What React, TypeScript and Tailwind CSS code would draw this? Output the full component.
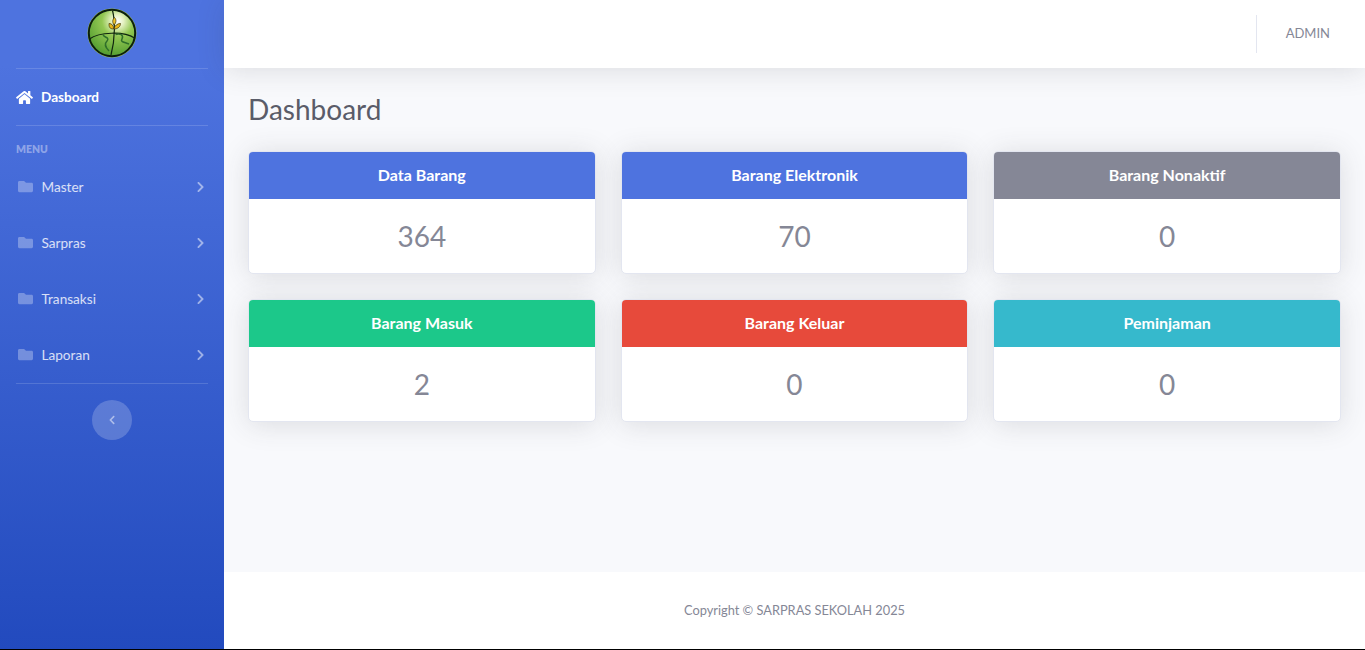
import React from "react";
import { FaHome, FaFolder, FaChevronRight, FaChevronLeft } from "react-icons/fa";

function Logo() {
  return (
    <svg width="50" height="50" viewBox="0 0 50 50" className="block">
      <defs>
        <radialGradient id="g" cx="0.62" cy="0.24" r="0.8">
          <stop offset="0" stopColor="#ffffff" />
          <stop offset="0.16" stopColor="#e6f2c4" />
          <stop offset="0.42" stopColor="#93c853" />
          <stop offset="1" stopColor="#4f9a2e" />
        </radialGradient>
      </defs>
      <circle cx="25" cy="25" r="24.5" fill="#a6c95a" />
      <circle cx="25" cy="25" r="23.2" fill="url(#g)" stroke="#0c1f0c" strokeWidth="2" />
      <path d="M2.5 31 C12 24 37 23 47.5 30" fill="none" stroke="#10260f" strokeWidth="1.2" />
      <path d="M25.5 2.5 C28 12 28.5 30 24 47" fill="none" stroke="#10260f" strokeWidth="1.2" />
      <path d="M16 26.5 C17 30 23 29 20 33 C17 36 18 39 22 43" fill="none" stroke="#2f6f2a" strokeWidth="1.5" />
      <path d="M28.5 26.5 C33 25 37 27 35 31 C33 34 37 34 42 36" fill="none" stroke="#2f6f2a" strokeWidth="1.5" />
      <path d="M26.5 21 C22 21 22 18 22 15.5 C24.5 15.5 27 17.5 26.5 21 Z" fill="#e8b71a" stroke="#3b3208" strokeWidth="0.7" />
      <path d="M27 21 C31 21 33.5 18.5 33.5 15.5 C30.5 15.5 27.5 17.5 27 21 Z" fill="#e8b71a" stroke="#3b3208" strokeWidth="0.7" />
      <path d="M27 17 C25 14 25.5 11.5 27.5 9.5 C29.5 11.5 29.5 14.5 27 17 Z" fill="#f0c52a" stroke="#3b3208" strokeWidth="0.7" />
    </svg>
  );
}

function NavItem({ label }: { label: string }) {
  return (
    <div className="h-14 px-4 flex items-center justify-between text-[13.6px] text-white/80">
      <div className="flex items-center">
        <FaFolder className="w-[15px] h-[15px] text-white/30 ml-[1.5px] mr-[9px]" />
        <span>{label}</span>
      </div>
      <FaChevronRight className="w-[9px] h-[12px] text-white/50 mr-[3px]" />
    </div>
  );
}

function Card({ title, value, color }: { title: string; value: string; color: string }) {
  return (
    <div className="bg-white rounded-[5px] border border-[#e3e6f0] overflow-hidden shadow-[0_2.4px_28px_0_rgba(58,59,69,0.15)]">
      <div className={`h-12 -mt-px -mx-px flex items-center justify-center text-white font-bold text-[16px] ${color}`}>
        {title}
      </div>
      <div className="h-[74px] flex items-center justify-center text-[28px] leading-none text-[#858796]">
        {value}
      </div>
    </div>
  );
}

export default function App() {
  return (
    <div
      className="h-[650px] bg-black overflow-hidden"
      style={{ fontFamily: '"Lato", "Noto Sans", sans-serif' }}
    >
      <div className="h-[649px] flex">
        <aside className="w-56 shrink-0 bg-gradient-to-b from-[#4e73df] from-10% to-[#224abe] flex flex-col">
          <div className="h-[68px] flex items-start justify-center pt-2">
            <Logo />
          </div>
          <div className="mx-4 border-t border-white/15" />
          <div className="h-14 px-4 flex items-center text-[13.6px] font-bold text-white">
            <FaHome className="w-[17px] h-[15px] mr-2" />
            <span>Dasboard</span>
          </div>
          <div className="mx-4 border-t border-white/15" />
          <div className="px-4 pt-[17px] pb-[3px] text-[10.4px] leading-[13px] font-extrabold text-white/40">MENU</div>
          <NavItem label="Master" />
          <NavItem label="Sarpras" />
          <NavItem label="Transaksi" />
          <NavItem label="Laporan" />
          <div className="mx-4 border-t border-white/15" />
          <div className="flex justify-center pt-4">
            <button className="w-10 h-10 rounded-full bg-white/20 flex items-center justify-center text-white/50">
              <FaChevronLeft className="w-[8px] h-[10px]" />
            </button>
          </div>
        </aside>
        <div className="flex-1 min-w-0 flex flex-col bg-[#f8f9fc]">
          <header className="h-[68px] shrink-0 bg-white flex items-center justify-end shadow-[0_2.4px_28px_0_rgba(58,59,69,0.15)] relative">
            <div className="h-[38px] border-l border-[#e3e6f0] pl-[29px] pr-[35px] flex items-center text-[13px] text-[#858796]">
              ADMIN
            </div>
          </header>
          <main className="flex-1 px-6 pt-6">
            <h1 className="text-[28px] leading-[34px] text-[#5a5c69] mb-[25px]">Dashboard</h1>
            <div className="grid grid-cols-3 gap-x-[25px] gap-y-[25px] w-[1093px]">
              <Card title="Data Barang" value="364" color="bg-[#4e73df]" />
              <Card title="Barang Elektronik" value="70" color="bg-[#4e73df]" />
              <Card title="Barang Nonaktif" value="0" color="bg-[#858796]" />
              <Card title="Barang Masuk" value="2" color="bg-[#1cc88a]" />
              <Card title="Barang Keluar" value="0" color="bg-[#e74a3b]" />
              <Card title="Peminjaman" value="0" color="bg-[#36b9cc]" />
            </div>
          </main>
          <footer className="h-[77px] shrink-0 bg-white flex items-center justify-center text-[12.8px] text-[#858796] relative">
            Copyright © SARPRAS SEKOLAH 2025
          </footer>
        </div>
      </div>
    </div>
  );
}
